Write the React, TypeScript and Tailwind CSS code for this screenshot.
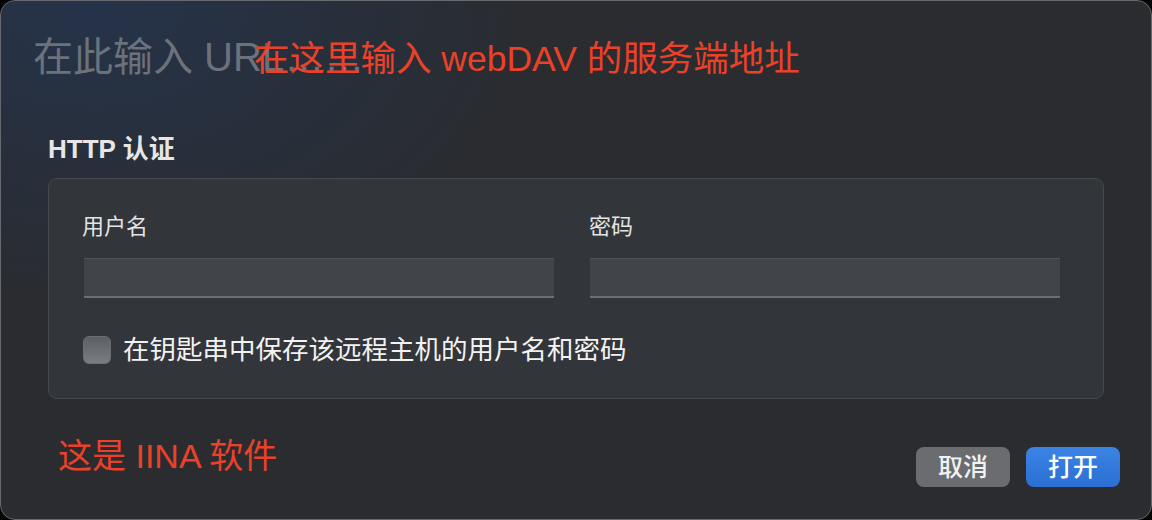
const font = { fontFamily: '"Liberation Sans", "Noto Sans CJK SC", sans-serif' };

export default function App() {
  return (
    <div className="h-[520px] w-[1152px] bg-black" style={font}>
      <div className="relative flex h-full flex-col overflow-hidden rounded-[15px] border border-[#66696d] bg-[#2a2c30] bg-[radial-gradient(ellipse_440px_300px_at_8%_0%,#25334a,transparent)] px-[47px] pt-[36px]">
        {/* url field */}
        <div className="relative -ml-[15px] h-[40px]">
          <span className="text-[40px] leading-none text-[#6b727b]">在此输入 URL……</span>
          <span className="absolute top-[5px] left-[221px] text-[35.5px] leading-none whitespace-nowrap text-[#ec4129]">
            在这里输入 webDAV 的服务端地址
          </span>
        </div>

        <div className="mt-[59px] text-[26px] leading-none font-bold text-[#e6e6e6]">HTTP 认证</div>

        <div className="mt-[16px] rounded-[9px] border border-[#46494d] bg-[#323539] pt-[37px] pr-[42px] pb-[34px] pl-[35px]">
          <div className="grid grid-cols-[470px_470px] gap-x-[36px]">
            <div className="-ml-[2px] text-[22px] leading-none text-[#e4e4e4]">用户名</div>
            <div className="-ml-[1px] text-[22px] leading-none text-[#e4e4e4]">密码</div>
            <div className="mt-[20px] h-[40px] border-t border-b-2 border-t-[#4e5155] border-b-[#6c6f73] bg-[#414448]" />
            <div className="mt-[20px] h-[40px] border-t border-b-2 border-t-[#4e5155] border-b-[#6c6f73] bg-[#414448]" />
          </div>
          <div className="mt-[38px] -ml-[1px] flex items-center gap-[12px]">
            <div className="h-[28px] w-[28px] rounded-[6px] border border-[#6a6d71] bg-gradient-to-b from-[#5c5f64] to-[#7a7d81]" />
            <span className="text-[26.5px] leading-none text-[#f2f2f2]">在钥匙串中保存该远程主机的用户名和密码</span>
          </div>
        </div>

        <div className="mt-[40px] -mr-[16px] flex items-start justify-between">
          <span className="ml-[10px] text-[34px] leading-none text-[#ec4129]">这是 IINA 软件</span>
          <div className="mt-[8px] flex gap-[16px]">
            <button className="h-[40px] w-[94px] rounded-[8px] bg-[#6a6c70] text-[25px] leading-none font-medium text-[#f2f2f2]">
              取消
            </button>
            <button className="h-[40px] w-[94px] rounded-[8px] bg-gradient-to-b from-[#3b84e4] to-[#2b6fd3] text-[25px] leading-none font-medium text-white">
              打开
            </button>
          </div>
        </div>
      </div>
    </div>
  );
}
